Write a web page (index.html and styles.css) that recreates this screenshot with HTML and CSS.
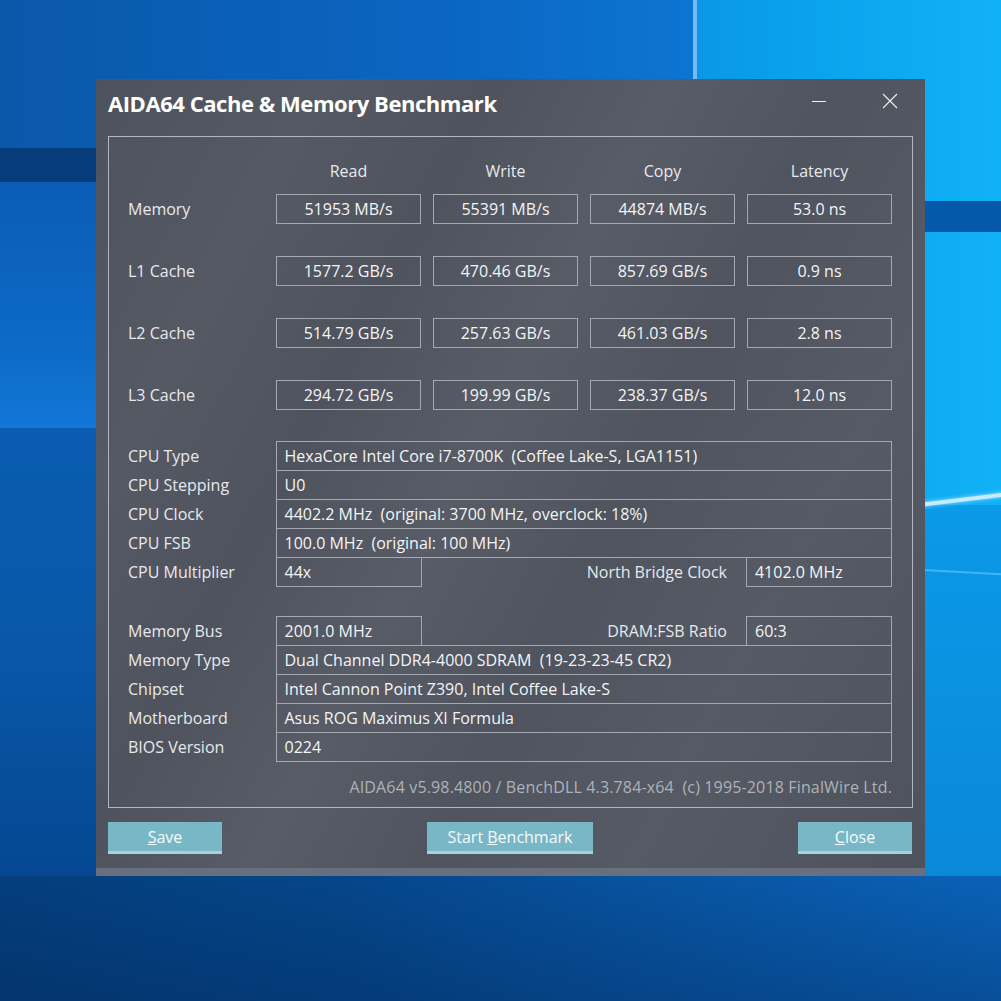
FILE: index.html
```html
<!DOCTYPE html>
<html lang="en">
<head>
  <meta charset="UTF-8">
  <meta name="viewport" content="width=device-width, initial-scale=1.0">
  <title>AIDA64 Cache &amp; Memory Benchmark</title>
  <link rel="stylesheet" href="styles.css">
</head>
<body>
  <!-- desktop wallpaper bits -->
  <div class="wallpaper">
    <div class="pane-right"></div>
    <div class="pane-right-low"></div>
    <div class="seam-top"></div>
    <div class="band-left"></div>
    <div class="band-right"></div>
    <div class="shade-left"></div>
    <div class="beam-right"></div>
    <div class="beam-right2"></div>
    <div class="floor-left"></div>
    <div class="floor"></div>
  </div>

  <div class="window">
    <div class="titlebar">
      <span class="title">AIDA64 Cache &amp; Memory Benchmark</span>
      <div class="controls">
        <svg width="16" height="16" viewBox="0 0 16 16"><path d="M1 8.5h14" stroke="#f0f0f0" stroke-width="1"/></svg>
        <svg width="16" height="16" viewBox="0 0 16 16"><path d="M1 1l14 14M15 1L1 15" stroke="#f0f0f0" stroke-width="1.1"/></svg>
      </div>
    </div>

    <div class="panel">
      <div class="bench-head">
        <span></span>
        <span>Read</span>
        <span>Write</span>
        <span>Copy</span>
        <span>Latency</span>
      </div>
      <div class="bench">
        <span class="label">Memory</span>
        <span class="box">51953 MB/s</span>
        <span class="box">55391 MB/s</span>
        <span class="box">44874 MB/s</span>
        <span class="box">53.0 ns</span>

        <span class="label">L1 Cache</span>
        <span class="box">1577.2 GB/s</span>
        <span class="box">470.46 GB/s</span>
        <span class="box">857.69 GB/s</span>
        <span class="box">0.9 ns</span>

        <span class="label">L2 Cache</span>
        <span class="box">514.79 GB/s</span>
        <span class="box">257.63 GB/s</span>
        <span class="box">461.03 GB/s</span>
        <span class="box">2.8 ns</span>

        <span class="label">L3 Cache</span>
        <span class="box">294.72 GB/s</span>
        <span class="box">199.99 GB/s</span>
        <span class="box">238.37 GB/s</span>
        <span class="box">12.0 ns</span>
      </div>

      <table class="info">
        <colgroup><col class="c-label"><col class="c-box"><col><col class="c-box"></colgroup>
        <tr><td class="label">CPU Type</td><td class="val" colspan="3">HexaCore Intel Core i7-8700K&nbsp; (Coffee Lake-S, LGA1151)</td></tr>
        <tr><td class="label">CPU Stepping</td><td class="val" colspan="3">U0</td></tr>
        <tr><td class="label">CPU Clock</td><td class="val" colspan="3">4402.2 MHz&nbsp; (original: 3700 MHz, overclock: 18%)</td></tr>
        <tr><td class="label">CPU FSB</td><td class="val" colspan="3">100.0 MHz&nbsp; (original: 100 MHz)</td></tr>
        <tr><td class="label">CPU Multiplier</td><td class="val">44x</td><td class="mid">North Bridge Clock</td><td class="val">4102.0 MHz</td></tr>
      </table>

      <table class="info second">
        <colgroup><col class="c-label"><col class="c-box"><col><col class="c-box"></colgroup>
        <tr><td class="label">Memory Bus</td><td class="val">2001.0 MHz</td><td class="mid">DRAM:FSB Ratio</td><td class="val">60:3</td></tr>
        <tr><td class="label">Memory Type</td><td class="val" colspan="3">Dual Channel DDR4-4000 SDRAM&nbsp; (19-23-23-45 CR2)</td></tr>
        <tr><td class="label">Chipset</td><td class="val" colspan="3">Intel Cannon Point Z390, Intel Coffee Lake-S</td></tr>
        <tr><td class="label">Motherboard</td><td class="val" colspan="3">Asus ROG Maximus XI Formula</td></tr>
        <tr><td class="label">BIOS Version</td><td class="val" colspan="3">0224</td></tr>
      </table>

      <div class="footer">AIDA64 v5.98.4800 / BenchDLL 4.3.784-x64&nbsp; (c) 1995-2018 FinalWire Ltd.</div>
    </div>

    <div class="buttons">
      <button class="btn"><u>S</u>ave</button>
      <button class="btn wide">Start <u>B</u>enchmark</button>
      <button class="btn"><u>C</u>lose</button>
    </div>
    <div class="window-edge"></div>
  </div>
</body>
</html>
```

FILE: styles.css
```css
html, body {
  margin: 0;
  height: 100%;
}
body {
  font-family: "Open Sans", "Noto Sans", sans-serif;
  overflow: hidden;
  position: relative;
  background: linear-gradient(90deg, #0a58aa 0%, #0b66c2 45%, #0c74d2 68%, #0a8fe2 100%);
}

/* wallpaper */
.wallpaper {
  position: absolute;
  inset: 0;
  overflow: hidden;
}
.wallpaper div {
  position: absolute;
}
.pane-right {
  left: 697px;
  top: 0;
  width: 310px;
  height: 505px;
  background: linear-gradient(90deg, #0a98e6 0%, #0ba6ef 50%, #12b2f6 100%);
}
.pane-right-low {
  left: 697px;
  top: 505px;
  width: 310px;
  height: 380px;
  background: linear-gradient(180deg, #0a9ae8 0%, #0a88d8 100%);
}
.seam-top {
  left: 693px;
  top: 0;
  width: 4px;
  height: 90px;
  background: #8fd6ff;
  opacity: 0.75;
}
.band-left {
  left: 0;
  top: 148px;
  width: 120px;
  height: 34px;
  background: #063c7a;
}
.band-right {
  left: 900px;
  top: 201px;
  width: 110px;
  height: 31px;
  background: #0659aa;
}
.shade-left {
  left: 0;
  top: 182px;
  width: 120px;
  height: 246px;
  background: linear-gradient(180deg, #0b5cb4 0%, #0d6bc8 70%, #1177d8 100%);
}
.beam-right {
  left: 900px;
  top: 498px;
  width: 120px;
  height: 4px;
  background: #c4ebff;
  transform: rotate(-7deg);
  box-shadow: 0 0 4px #9edcff;
}
.beam-right2 {
  left: 900px;
  top: 571px;
  width: 120px;
  height: 2px;
  background: #3fb6f8;
  transform: rotate(3deg);
}
.floor-left {
  left: 0;
  top: 428px;
  width: 120px;
  height: 460px;
  background: linear-gradient(180deg, #0a5cb2 0%, #0857a8 50%, #054690 100%);
}
.floor {
  left: 0;
  top: 876px;
  width: 1001px;
  height: 130px;
  background: linear-gradient(180deg, rgba(2, 30, 75, 0) 0%, rgba(2, 30, 75, 0.3) 100%),
              linear-gradient(90deg, #043e7c 0%, #05468a 35%, #0853a0 65%, #0a62b8 100%);
}

/* window */
.window {
  position: relative;
  box-sizing: border-box;
  width: 829px;
  height: 797px;
  top: 79px;
  left: 96px;
  display: flex;
  flex-direction: column;
  background: linear-gradient(118deg, #4d525c 0%, #545963 18%, #4e535d 32%, #575c66 46%, #4f545e 60%, #555a64 76%, #4d525c 100%);
}
.titlebar {
  height: 57px;
  display: flex;
  align-items: center;
  padding: 0 27px 9px 12px;
  box-sizing: border-box;
}
.title {
  color: #ffffff;
  font-size: 22px;
  font-weight: 700;
  letter-spacing: -0.45px;
}
.controls {
  margin-left: auto;
  margin-bottom: 5px;
  display: flex;
  gap: 55px;
  align-items: center;
}

.panel {
  box-sizing: border-box;
  height: 672px;
  margin: 0 12px;
  border: 1px solid #b2b6bd;
  padding: 23px 20px 0 19px;
  color: #e8e9ec;
  font-size: 16px;
}
.bench-head,
.bench {
  display: grid;
  grid-template-columns: 136px repeat(4, 145px);
  column-gap: 12px;
}
.bench-head {
  height: 22px;
  line-height: 22px;
  text-align: center;
}
.bench {
  margin-top: 12px;
  row-gap: 32px;
}
.label {
  white-space: nowrap;
}
.bench .label {
  line-height: 30px;
}
.box {
  box-sizing: border-box;
  height: 30px;
  line-height: 28px;
  border: 1px solid #a4a8b0;
  text-align: center;
  color: #f4f4f4;
}

.info {
  border-collapse: collapse;
  table-layout: fixed;
  width: 764px;
  margin-top: 31px;
}
.info.second {
  margin-top: 29px;
}
.c-label { width: 148px; }
.c-box { width: 145px; }
.info td {
  height: 28px;
  padding: 0;
  white-space: nowrap;
}
.info .val {
  border: 1px solid #a4a8b0;
  padding: 0 8px;
  color: #f4f4f4;
}
.info .mid {
  text-align: right;
  padding-right: 19px;
}

.footer {
  margin-top: 14px;
  text-align: right;
  color: #aeb2b8;
  line-height: 22px;
  letter-spacing: 0.15px;
}

.buttons {
  display: flex;
  justify-content: space-between;
  padding: 0 13px 0 12px;
  margin-top: 14px;
}
.btn {
  box-sizing: border-box;
  width: 114px;
  height: 32px;
  border: none;
  border-bottom: 3px solid #a2d3de;
  background: #78b7c5;
  color: #f6fafb;
  font-family: "Open Sans", "Noto Sans", sans-serif;
  font-size: 16px;
  padding: 0;
}
.btn.wide {
  width: 166px;
}
.window-edge {
  margin-top: auto;
  height: 8px;
  background: #687080;
}
```
